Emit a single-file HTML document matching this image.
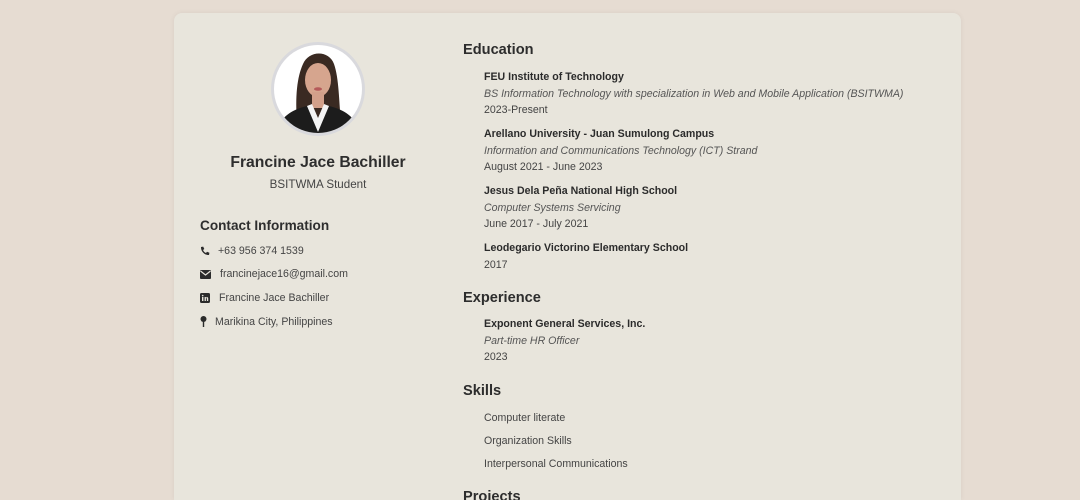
<!DOCTYPE html>
<html style="height:500px;overflow:hidden"><head><style>
body{margin:0;width:1080px;height:500px;overflow:hidden;background:#e6dcd2;font-family:"Liberation Sans",Arial,sans-serif;color:#333;position:relative}
.card{position:absolute;left:174px;top:13px;width:787px;height:487px;background:#e8e5dc;border-radius:8px 8px 0 0;box-shadow:0 0 6px rgba(0,0,0,0.06)}
.t{position:absolute;white-space:nowrap;line-height:1}
.s11{font-size:10.6px}
.b{font-weight:bold;color:#2b2b2b}
.i{font-style:italic;color:#555}
.h2{font-size:14.6px;font-weight:bold;color:#2d2d2d}
</style></head><body>
<div class="card"></div>
<svg style="position:absolute;left:271px;top:42px" width="94" height="94" viewBox="0 0 94 94">
<defs><clipPath id="c"><circle cx="47" cy="47" r="44"/></clipPath></defs>
<circle cx="47" cy="47" r="47" fill="#d9d9dd"/>
<g clip-path="url(#c)">
<rect width="94" height="94" fill="#fff"/>
<path d="M26 80 C24 55 26 35 32 22 C38 8 58 8 63 22 C68 36 68 60 70 80Z" fill="#3a2a22"/>
<ellipse cx="47" cy="38" rx="13" ry="17" fill="#d6a58e"/>
<rect x="41" y="50" width="12" height="16" fill="#d2a08a"/>
<path d="M5 94 C8 75 20 68 36 64 L47 80 L58 64 C74 68 86 75 89 94Z" fill="#1c1c1c"/>
<path d="M36 64 L47 90 L58 64 L53 62 L47 76 L41 62Z" fill="#f4f4f4"/>
<ellipse cx="47" cy="47" rx="4" ry="1.8" fill="#b55a5a"/>
</g></svg>
<div class="t" style="left:174px;width:288px;text-align:center;top:155px;font-size:15.7px;font-weight:bold;color:#2e2e2e">Francine Jace Bachiller</div>
<div class="t" style="left:174px;width:288px;text-align:center;top:179px;font-size:11.6px;color:#444">BSITWMA Student</div>
<div class="t" style="left:200px;top:219px;font-size:13.6px;font-weight:bold;color:#2e2e2e">Contact Information</div>
<svg style="position:absolute;left:200px;top:246px" width="10" height="10" viewBox="0 0 10 10"><path d="M1 1 L3.2 0.6 L4.3 3 L3 4 C3.7 5.5 4.6 6.4 6 7 L7 5.7 L9.4 6.8 L9 9 C4.5 9.2 0.8 5.5 1 1Z" fill="#2b2b2b"/></svg>
<div class="t s11" style="left:218px;top:246px;color:#444">+63 956 374 1539</div>
<svg style="position:absolute;left:200px;top:270px" width="11" height="9" viewBox="0 0 11 9"><rect x="0" y="0" width="11" height="9" rx="1" fill="#2b2b2b"/><path d="M0.5 1 L5.5 5 L10.5 1" stroke="#e8e5dc" stroke-width="1.2" fill="none"/></svg>
<div class="t s11" style="left:220px;top:269px;color:#444">francinejace16@gmail.com</div>
<svg style="position:absolute;left:200px;top:293px" width="10" height="10" viewBox="0 0 10 10"><rect width="10" height="10" rx="1.5" fill="#2b2b2b"/><rect x="2" y="4" width="1.4" height="4" fill="#e8e5dc"/><circle cx="2.7" cy="2.6" r="0.8" fill="#e8e5dc"/><path d="M4.6 8 V4 H5.9 V5 C6.5 3.8 8.2 3.8 8.2 5.4 V8 H6.9 V5.8 C6.9 4.9 5.9 4.9 5.9 5.8 V8Z" fill="#e8e5dc"/></svg>
<div class="t s11" style="left:219px;top:293px;color:#444">Francine Jace Bachiller</div>
<svg style="position:absolute;left:200px;top:316px" width="7" height="11" viewBox="0 0 7 11"><circle cx="3.5" cy="3" r="3" fill="#2b2b2b"/><rect x="2.8" y="4" width="1.4" height="7" fill="#2b2b2b"/></svg>
<div class="t s11" style="left:215px;top:317px;color:#444">Marikina City, Philippines</div>

<div class="t h2" style="left:463px;top:43px">Education</div>
<div class="t s11 b" style="left:484px;top:72px">FEU Institute of Technology</div>
<div class="t s11 i" style="left:484px;top:89px">BS Information Technology with specialization in Web and Mobile Application (BSITWMA)</div>
<div class="t s11" style="left:484px;top:105px;color:#444">2023-Present</div>
<div class="t s11 b" style="left:484px;top:129px">Arellano University - Juan Sumulong Campus</div>
<div class="t s11 i" style="left:484px;top:146px">Information and Communications Technology (ICT) Strand</div>
<div class="t s11" style="left:484px;top:162px;color:#444">August 2021 - June 2023</div>
<div class="t s11 b" style="left:484px;top:186px">Jesus Dela Peña National High School</div>
<div class="t s11 i" style="left:484px;top:203px">Computer Systems Servicing</div>
<div class="t s11" style="left:484px;top:219px;color:#444">June 2017 - July 2021</div>
<div class="t s11 b" style="left:484px;top:243px">Leodegario Victorino Elementary School</div>
<div class="t s11" style="left:484px;top:260px;color:#444">2017</div>

<div class="t h2" style="left:463px;top:291px">Experience</div>
<div class="t s11 b" style="left:484px;top:319px">Exponent General Services, Inc.</div>
<div class="t s11 i" style="left:484px;top:336px">Part-time HR Officer</div>
<div class="t s11" style="left:484px;top:352px;color:#444">2023</div>

<div class="t h2" style="left:463px;top:384px">Skills</div>
<div class="t s11" style="left:484px;top:413px;color:#444">Computer literate</div>
<div class="t s11" style="left:484px;top:436px;color:#444">Organization Skills</div>
<div class="t s11" style="left:484px;top:459px;color:#444">Interpersonal Communications</div>
<div class="t h2" style="left:463px;top:490px">Projects</div>
</body></html>
